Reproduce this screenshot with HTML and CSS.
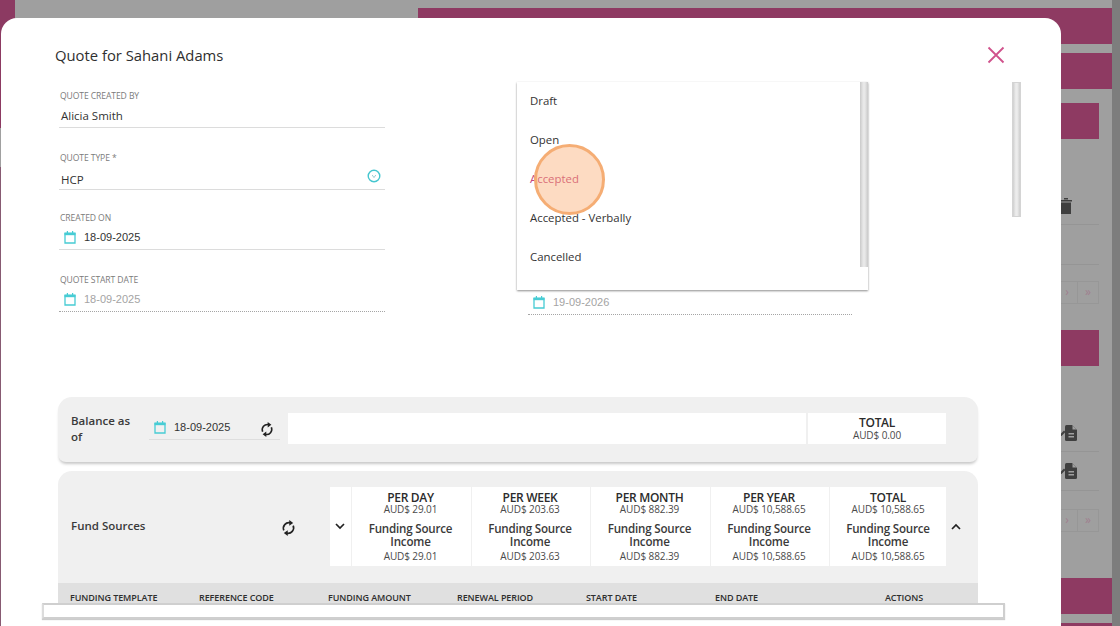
FILE: index.html
```html
<!DOCTYPE html>
<html lang="en">
<head>
<meta charset="utf-8">
<title>Quote for Sahani Adams</title>
<link rel="stylesheet" href="styles.css">
</head>
<body>
<svg class="defs" width="0" height="0" aria-hidden="true">
  <symbol id="cal" viewBox="0 0 12 13"><path d="M1 2.5h10v9.5H1z" fill="none" stroke="currentColor" stroke-width="1.3"/><path d="M.5 1.6h11v2.6H.5z" fill="currentColor"/><path d="M2.8 0h1.2v2H2.8zM8 0h1.2v2H8z" fill="currentColor"/></symbol>
  <symbol id="ref" viewBox="0 0 16 18"><path d="M3 11.5A6 6 0 0 1 9.8 3.4" fill="none" stroke="currentColor" stroke-width="1.8"/><path d="M8.8 .4 13 3.6 8.8 6.6z" fill="currentColor"/><path d="M13 6.5A6 6 0 0 1 6.2 14.6" fill="none" stroke="currentColor" stroke-width="1.8"/><path d="M7.2 11.4 3 14.4l4.2 3.2z" fill="currentColor"/></symbol>
  <symbol id="doc" viewBox="0 0 18 16"><path d="M5 1.5Q5 0 6.5 0H12l5 5v9.5Q17 16 15.5 16H6.5Q5 16 5 14.5z" fill="currentColor"/><path d="M12.5 .6V4.5H16.5z" fill="#a0a0a0"/><path d="M0 9.5 4 5.5l1.5 1.5L1.5 11H0z" fill="currentColor"/><path d="M8.5 8h5.5v1.4H8.5zM8.5 11h5.5v1.4H8.5z" fill="#a0a0a0"/></symbol>
</svg>

<div class="page">
  <div class="side"></div>
  <div class="main">
    <div class="bar"></div>
    <div class="bar"></div>
    <div class="bar bar-short"></div>
    <div class="bg-row bg-row-trash">
      <svg class="trash" width="12" height="16" viewBox="0 0 12 16"><path d="M0 2h12v1.6H0zM4 0h4v1.6H4zM1 4.4h10V16H1z" fill="#3f3f3f"/></svg>
    </div>
    <div class="bg-row bg-row-plain"></div>
    <div class="pager"><span class="pg">›</span><span class="pg">»</span></div>
    <div class="bar bar-short bar-mid"></div>
    <div class="bg-row bg-row-doc"><svg class="doc" width="18" height="16"><use href="#doc"/></svg></div>
    <div class="bg-row bg-row-doc2"><svg class="doc" width="18" height="16"><use href="#doc"/></svg></div>
    <div class="pager pager-2"><span class="pg">›</span><span class="pg">»</span></div>
    <div class="bar bar-low"></div>
    <div class="bar"></div>
  </div>
  <div class="page-scroll"></div>
</div>

<section class="modal">
  <header class="modal-head">
    <h1 class="modal-title">Quote for Sahani Adams</h1>
    <svg class="close" width="18" height="18" viewBox="0 0 18 18"><path d="M1.5 1.5l15 15M16.5 1.5l-15 15" stroke="#d0528c" stroke-width="1.8" fill="none"/></svg>
  </header>

  <div class="form">
    <div class="col">
      <div class="field f1">
        <label class="lbl">QUOTE CREATED BY</label>
        <div class="val val-text">Alicia Smith</div>
      </div>
      <div class="field f2">
        <label class="lbl">QUOTE TYPE *</label>
        <div class="val val-text val-select">HCP
          <svg class="sel-ico" width="14" height="14" viewBox="0 0 14 14"><circle cx="7" cy="7" r="5.8" fill="none" stroke="#45c6cf" stroke-width="1.4"/><path d="M5.2 6l1.8 2.6L8.8 6" fill="none" stroke="#7fbfc6" stroke-width=".8"/></svg>
        </div>
      </div>
      <div class="field f3">
        <label class="lbl">CREATED ON</label>
        <div class="val val-date"><svg class="cal" width="12" height="13"><use href="#cal"/></svg><span>18-09-2025</span></div>
      </div>
      <div class="field f4 disabled">
        <label class="lbl">QUOTE START DATE</label>
        <div class="val val-date"><svg class="cal" width="12" height="13"><use href="#cal"/></svg><span>18-09-2025</span></div>
      </div>
    </div>
    <div class="col col-right">
      <div class="field disabled">
        <div class="val val-date"><svg class="cal" width="12" height="13"><use href="#cal"/></svg><span>19-09-2026</span></div>
      </div>
    </div>
  </div>

  <div class="card card-balance">
    <div class="bal-label">Balance as of</div>
    <div class="bal-date">
      <svg class="cal" width="12" height="13"><use href="#cal"/></svg><span>18-09-2025</span>
      <svg class="ref ref-a" width="14" height="17"><use href="#ref"/></svg>
    </div>
    <div class="bal-strip">
      <div class="bal-empty"></div>
      <div class="cell bal-total"><b>TOTAL</b><small>AUD$ 0.00</small></div>
    </div>
  </div>

  <div class="card card-fund">
    <div class="fund-top">
      <div class="fund-label">Fund Sources</div>
      <svg class="ref ref-b" width="15" height="18"><use href="#ref"/></svg>
      <div class="fund-strip">
        <div class="chev-cell"><svg width="10" height="7" viewBox="0 0 10 7"><path d="M1 1l4 4 4-4" fill="none" stroke="#222" stroke-width="1.7"/></svg></div>
        <div class="cell c-day"><b>PER DAY</b><small>AUD$ 29.01</small><strong>Funding Source Income</strong><small>AUD$ 29.01</small></div>
        <div class="cell c-week"><b>PER WEEK</b><small>AUD$ 203.63</small><strong>Funding Source Income</strong><small>AUD$ 203.63</small></div>
        <div class="cell c-month"><b>PER MONTH</b><small>AUD$ 882.39</small><strong>Funding Source Income</strong><small>AUD$ 882.39</small></div>
        <div class="cell c-year"><b>PER YEAR</b><small>AUD$ 10,588.65</small><strong>Funding Source Income</strong><small>AUD$ 10,588.65</small></div>
        <div class="cell c-total"><b>TOTAL</b><small>AUD$ 10,588.65</small><strong>Funding Source Income</strong><small>AUD$ 10,588.65</small></div>
      </div>
      <svg class="chev-up" width="10" height="7" viewBox="0 0 10 7"><path d="M1 6l4-4 4 4" fill="none" stroke="#222" stroke-width="1.7"/></svg>
    </div>
    <div class="thead">
      <span class="th t1">FUNDING TEMPLATE</span>
      <span class="th t2">REFERENCE CODE</span>
      <span class="th t3">FUNDING AMOUNT</span>
      <span class="th t4">RENEWAL PERIOD</span>
      <span class="th t5">START DATE</span>
      <span class="th t6">END DATE</span>
      <span class="th t7">ACTIONS</span>
    </div>
  </div>

  <div class="v-scroll"></div>
  <div class="h-scroll"></div>

  <ul class="dropdown">
    <li>Draft</li>
    <li>Open</li>
    <li class="active">Accepted</li>
    <li>Accepted - Verbally</li>
    <li>Cancelled</li>
    <li class="dd-thumb" aria-hidden="true"></li>
    <li class="click-mark" aria-hidden="true"></li>
  </ul>
</section>
</body>
</html>
```

FILE: styles.css
```css
* { box-sizing: border-box; }
html, body { margin: 0; padding: 0; width: 1120px; height: 626px; overflow: hidden; }
body { font-family: "Open Sans", sans-serif; color: #2e2e2e; background: #9f9f9f; position: relative; }
.defs { position: absolute; }

/* dimmed page behind the dialog */
.page { display: flex; width: 1120px; height: 626px; overflow: hidden; }
.side { width: 15px; height: 626px; background: linear-gradient(#8c3a62 0, #8c3a62 128px, #a0a0a0 128px, #a0a0a0 167px, #875a72 167px, #875a72 626px); }
.main { flex: 1; padding: 8px 0 0 403px; }
.page-scroll { width: 8px; background: #7d7d7d; }
.bar { height: 36px; background: #8e3a62; margin-bottom: 9px; }
.bar-short { margin-right: 13px; margin-bottom: 0; margin-top: 14px; }
.bg-row { margin-right: 13px; border-bottom: 1px solid #959595; display: flex; justify-content: flex-end; }
.bg-row-trash { height: 86px; padding-top: 59px; padding-right: 27px; }
.trash { display: block; }
.bg-row-plain { height: 40px; }
.pager { display: flex; justify-content: flex-end; margin: 16px 13px 0 0; height: 23px; }
.pg { width: 22px; height: 23px; border: 1px solid #979797; margin-left: -1px; text-align: center; color: #a0808f; font-size: 12px; line-height: 19px; }
.bar-mid { margin-top: 26px; }
.bg-row-doc { height: 86px; padding-top: 59px; padding-right: 21px; }
.bg-row-doc2 { height: 39px; padding-top: 11px; padding-right: 21px; }
.doc { display: block; color: #3f3f3f; }
.pager-2 { margin-top: 18px; }
.bar-low { margin-top: 46px; }

/* dialog */
.modal { position: absolute; left: 1px; top: 18px; width: 1060px; height: 640px; background: #fff; border-radius: 16px; }
.modal-head { display: flex; justify-content: space-between; align-items: center; height: 36px; margin-top: 19px; padding: 0 56px 0 54px; }
.modal-title { margin: 0; font-size: 14.8px; font-weight: 400; color: #2f2f2f; line-height: 36px; }
.close { display: block; }

.form { display: flex; height: 324px; padding: 1px 0 0 58px; }
.col { width: 326px; }
.col-right { width: 324px; margin-left: 143px; padding-top: 208px; }

.field { border-bottom: 1px solid #dcdcdc; }
.f1 { height: 54px; padding-top: 16px; }
.f2 { height: 62px; padding-top: 24px; }
.f3 { height: 60px; padding-top: 22px; }
.f4 { height: 62px; padding-top: 24px; }
.disabled { border-bottom: 1px dotted #a5a5a5; }
.lbl { display: block; font-size: 8.6px; line-height: 12px; color: #7b7b7b; letter-spacing: -.1px; padding-left: 1px; }
.val { font-size: 11.5px; color: #333; }
.val-text { padding-left: 2px; line-height: 18px; margin-top: 5px; }
.val-select { position: relative; margin-top: 6px; line-height: 20px; }
.sel-ico { position: absolute; right: 4px; top: -1px; }
.val-date { display: flex; align-items: center; gap: 8px; font-family: "Liberation Sans", sans-serif; font-size: 11px; height: 20px; margin-top: 3px; padding-left: 5px; color: #333; }
.cal { color: #47ccd4; display: block; flex: none; }
.disabled .val-date { color: #a4a4a4; }
.col-right .val-date { margin-top: 0; height: 20px; padding-left: 5px; }
.col-right .field { height: 33px; padding-top: 10px; }

/* cards */
.card { background: #f0f0f0; border-radius: 14px 14px 8px 8px; margin-left: 57px; width: 920px; box-shadow: 0 3px 3px -1px rgba(0,0,0,.22); }
.card-balance { height: 65px; display: flex; align-items: flex-start; padding: 16px 32px 0 13px; }
.bal-label { width: 78px; padding-right: 8px; font-size: 11.5px; font-weight: 600; line-height: 16px; color: #3a3a3a; }
.bal-date { width: 131px; height: 27px; border-bottom: 1px solid #dedede; display: flex; align-items: center; gap: 8px; padding: 2px 0 0 5px; font-family: "Liberation Sans", sans-serif; font-size: 11px; color: #333; }
.ref { color: #222; display: block; }
.ref-a { margin-left: 22px; margin-top: 5px; flex: none; }
.bal-strip { display: flex; gap: 2px; width: 658px; height: 31px; margin-left: 8px; }
.bal-empty { flex: 1; background: #fff; }
.cell { background: #fff; text-align: center; display: flex; flex-direction: column; align-items: center; height: 100%; padding: 4px 2px 0 0; }
.bal-total { width: 138px; padding: 3px 0 0 0; }
.cell b { font-size: 12px; font-weight: 600; line-height: 13px; letter-spacing: -.3px; color: #2b2b2b; }
.bal-total b { line-height: 14px; }
.cell small { font-size: 10px; line-height: 11px; color: #4a4a4a; letter-spacing: -.1px; }
.cell strong { font-size: 11.6px; font-weight: 600; line-height: 13px; letter-spacing: -.2px; color: #3a3a3a; width: 100px; margin: 7px 0 3px; }

.card-fund { margin-top: 9px; height: 140px; border-radius: 14px 14px 0 0; box-shadow: none; }
.fund-top { height: 112px; display: flex; align-items: flex-start; padding: 16px 0 0 13px; }
.fund-label { width: 210px; font-size: 11.5px; font-weight: 600; margin-top: 31px; line-height: 16px; color: #3a3a3a; }
.ref-b { margin-top: 32px; flex: none; margin-right: 34px; }
.fund-strip { display: flex; gap: 1px; height: 79px; }
.chev-cell { width: 21px; background: #fff; display: flex; justify-content: center; padding: 36px 1px 0 0; }
.chev-cell svg { display: block; }
.c-day { width: 119px; }
.c-week { width: 118px; }
.c-month { width: 119px; }
.c-year { width: 118px; }
.c-total { width: 116px; padding-right: 0; }
.chev-up { display: block; margin: 36px 0 0 5px; flex: none; }
.thead { height: 28px; background: #e0e0e0; display: flex; align-items: flex-start; padding: 9px 0 0 12px; }
.th { font-size: 9px; font-weight: 600; line-height: 12px; color: #2e2e2e; letter-spacing: -.08px; flex: none; }
.t1, .t2, .t3, .t4, .t5 { width: 129px; }
.t6 { width: 170px; }
.t7 { width: 60px; }

.v-scroll { position: absolute; left: 1011px; top: 64px; width: 9px; height: 135px; background: linear-gradient(90deg, #cfcfcf, #ececec 40%, #ececec 60%, #cfcfcf); border: 1px solid #d4d4d4; }
.h-scroll { position: absolute; left: 41px; top: 585px; width: 963px; height: 16px; background: #fff; border: 2px solid #cfcfcf; border-left-color: #dcdcdc; box-shadow: 0 1px 1px rgba(0,0,0,.2); }

/* open status menu */
.dropdown { position: absolute; left: 516px; top: 64px; width: 351px; height: 208px; margin: 0; padding: 0; list-style: none; background: #fff; box-shadow: 0 1px 2px rgba(0,0,0,.45); }
.dropdown li { height: 39px; line-height: 38px; padding-left: 13px; font-size: 11.4px; color: #333; }
.dropdown .active { color: #c2447f; }
.dropdown .dd-thumb { position: absolute; right: 0; top: 0; width: 8px; height: 185px; padding: 0; background: linear-gradient(90deg, #c9c9c9, #e8e8e8 40%, #e8e8e8 60%, #c9c9c9); }
.dropdown .click-mark { position: absolute; left: 17px; top: 62px; width: 71px; height: 71px; padding: 0; border-radius: 50%; background: rgba(250,170,110,.42); border: 3px solid #f5ad74; }
```
